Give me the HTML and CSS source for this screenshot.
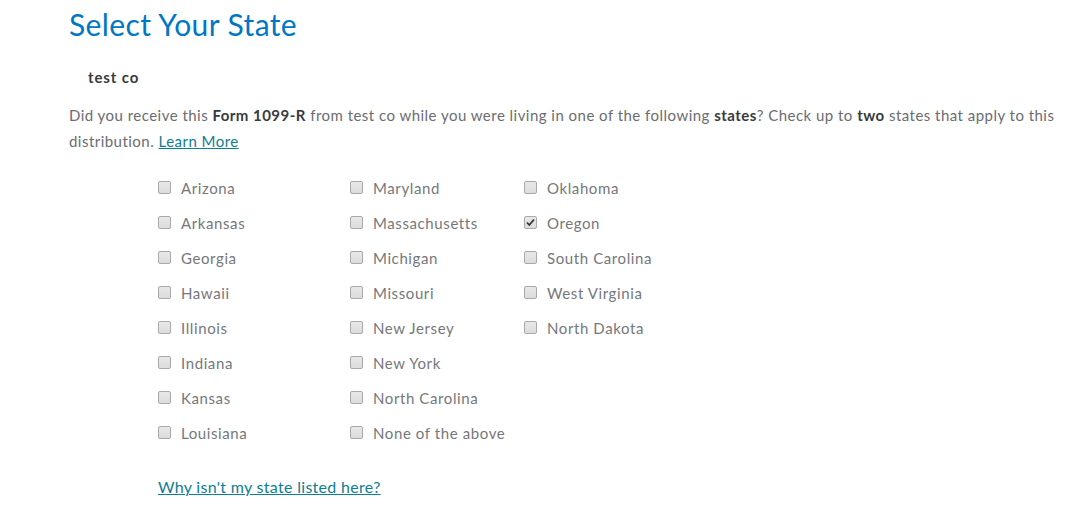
FILE: index.html
```html
<!DOCTYPE html>
<html>
<head>
<meta charset="utf-8">
<link rel="stylesheet" href="styles.css">
</head>
<body>
<div class="page">
  <h1 class="title">Select Your State</h1>
  <div class="payer">test co</div>
  <p class="intro">Did you receive this <b>Form 1099-R</b> from test co while you were living in one of the following <b>states</b>? Check up to <b>two</b> states that apply to this distribution. <a href="#" class="link">Learn More</a></p>
  <div class="states">
    <label class="opt"><span class="box"></span>Arizona</label>
    <label class="opt"><span class="box"></span>Arkansas</label>
    <label class="opt"><span class="box"></span>Georgia</label>
    <label class="opt"><span class="box"></span>Hawaii</label>
    <label class="opt"><span class="box"></span>Illinois</label>
    <label class="opt"><span class="box"></span>Indiana</label>
    <label class="opt"><span class="box"></span>Kansas</label>
    <label class="opt"><span class="box"></span>Louisiana</label>
    <label class="opt"><span class="box"></span>Maryland</label>
    <label class="opt"><span class="box"></span>Massachusetts</label>
    <label class="opt"><span class="box"></span>Michigan</label>
    <label class="opt"><span class="box"></span>Missouri</label>
    <label class="opt"><span class="box"></span>New Jersey</label>
    <label class="opt"><span class="box"></span>New York</label>
    <label class="opt"><span class="box"></span>North Carolina</label>
    <label class="opt"><span class="box"></span>None of the above</label>
    <label class="opt"><span class="box"></span>Oklahoma</label>
    <label class="opt"><span class="box checked"><svg viewBox="0 0 13 13" width="13" height="13"><path d="M3 6.5 L5.3 9 L10 3.5" fill="none" stroke="#333" stroke-width="1.8"/></svg></span>Oregon</label>
    <label class="opt"><span class="box"></span>South Carolina</label>
    <label class="opt"><span class="box"></span>West Virginia</label>
    <label class="opt"><span class="box"></span>North Dakota</label>
  </div>
  <a href="#" class="link why">Why isn't my state listed here?</a>
</div>
</body>
</html>
```

FILE: styles.css
```css
html, body {
  margin: 0;
  padding: 0;
  background: #fff;
}
.page {
  padding: 6px 20px 0 69px;
  font-family: "Lato", "Liberation Sans", sans-serif;
  color: #6b6c72;
}
.title {
  margin: 0;
  font-size: 30px;
  font-weight: 400;
  color: #0077c5;
  line-height: 36px;
  letter-spacing: 0.4px;
}
.payer {
  margin: 25px 0 0 19px;
  font-size: 15px;
  font-weight: 700;
  color: #393a3d;
  line-height: 20px;
  letter-spacing: 0.9px;
}
.intro {
  margin: 15px 0 0 0;
  font-size: 15px;
  line-height: 26px;
  letter-spacing: 0.47px;
}
.intro b {
  color: #393a3d;
}
.link {
  color: #0d7e93;
  text-decoration: underline;
}
.states {
  margin: 16px 0 0 89px;
  display: grid;
  grid-template-columns: 192px 174px auto;
  grid-template-rows: repeat(8, 35px);
  grid-auto-flow: column;
}
.opt {
  display: flex;
  align-items: center;
  font-size: 15px;
  color: #76777c;
  height: 35px;
  letter-spacing: 0.6px;
}
.box {
  box-sizing: border-box;
  width: 13px;
  height: 13px;
  border: 1px solid #a9a9a9;
  border-radius: 2px;
  background: linear-gradient(#e8e8e8, #dcdcdc);
  margin-right: 10px;
  display: flex;
}
.box svg {
  margin: -1px;
}
.why {
  display: inline-block;
  margin: 27px 0 0 89px;
  font-size: 16px;
  letter-spacing: 0.3px;
}
```
